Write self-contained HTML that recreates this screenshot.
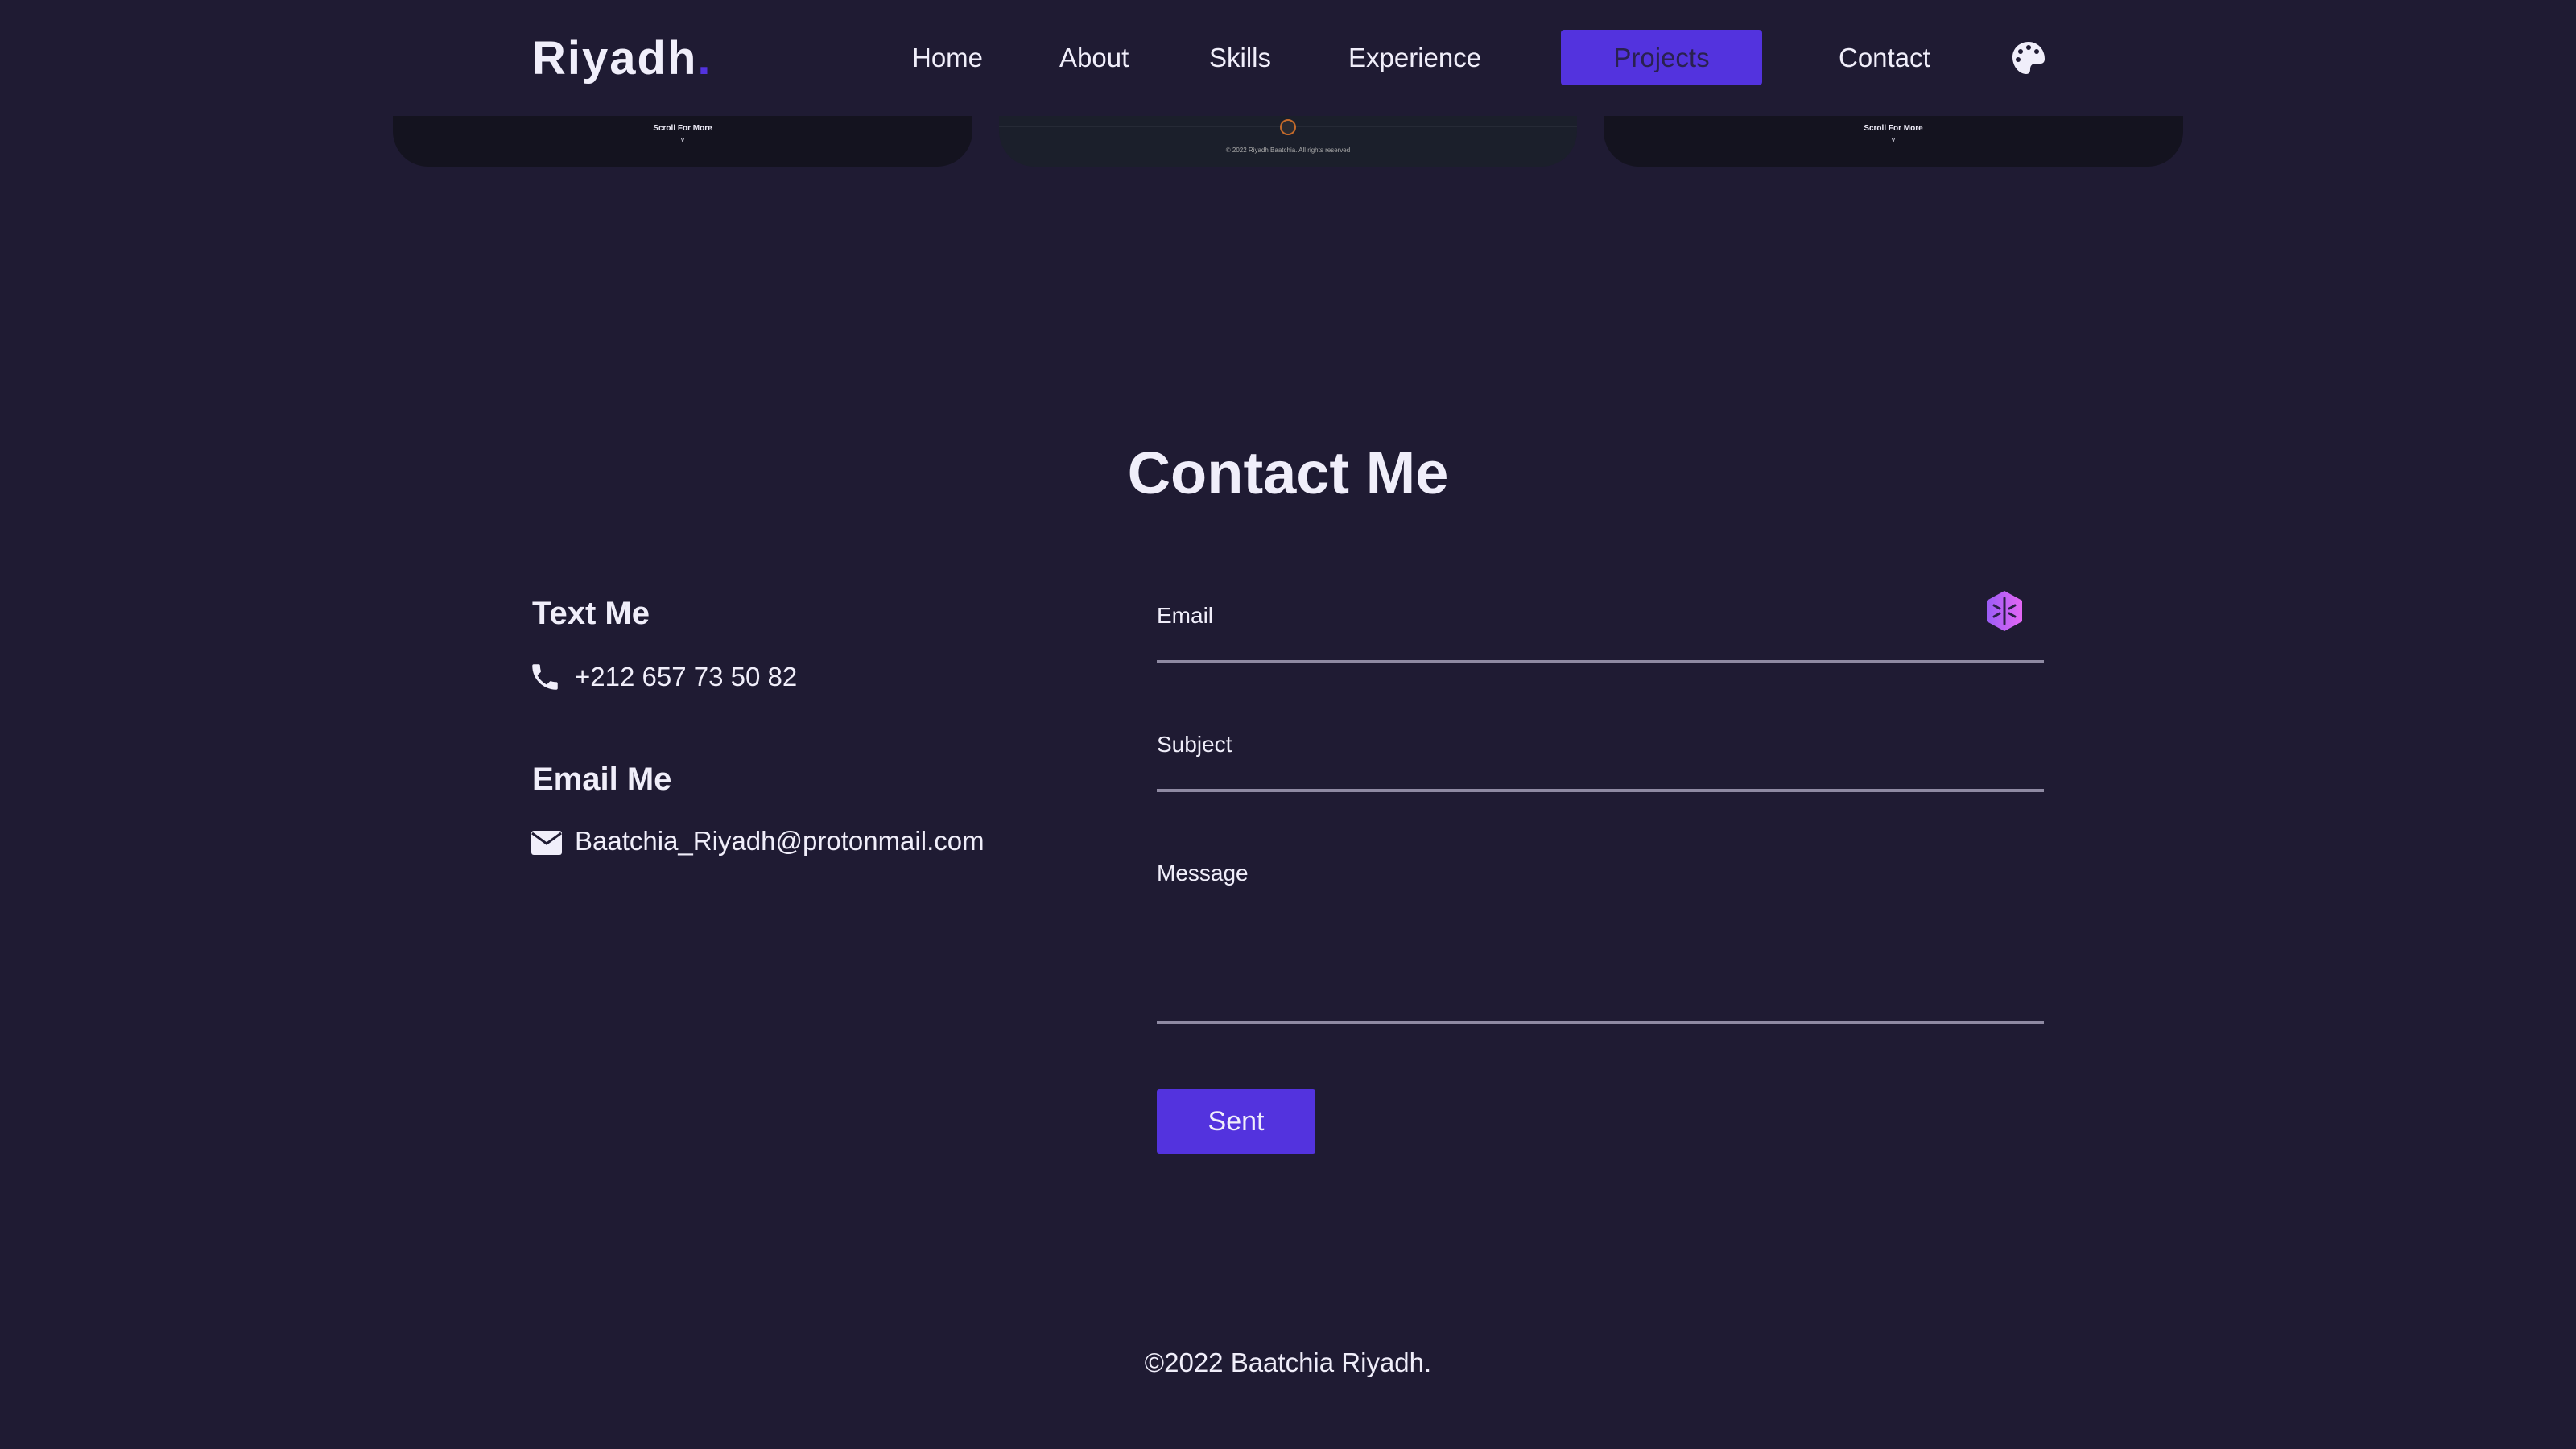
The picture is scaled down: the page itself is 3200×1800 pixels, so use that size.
<!DOCTYPE html>
<html><head><meta charset="utf-8"><style>
*{margin:0;padding:0;box-sizing:border-box}
body{width:3200px;height:1800px;background:#1f1b33;color:#f0eefa;font-family:"Liberation Sans",sans-serif;position:relative;overflow:hidden}
.a{position:absolute;white-space:nowrap}
.nav{font-size:33px;top:50px;line-height:44px}
.card{position:absolute;top:144px;height:63px;border-radius:0 0 44px 44px}
.lbl{font-size:28px}
.line{position:absolute;left:1437px;width:1102px;height:4px;background:#8f8aa3}
</style></head><body>
<div class="a" style="left:661px;top:36px;font-size:58px;font-weight:bold;letter-spacing:2px;line-height:74px">Riyadh<span style="color:#5333de">.</span></div>
<div class="a nav" style="left:1133px">Home</div>
<div class="a nav" style="left:1316px">About</div>
<div class="a nav" style="left:1502px">Skills</div>
<div class="a nav" style="left:1675px">Experience</div>
<div class="a" style="left:1939px;top:37px;width:250px;height:69px;background:#5333de;border-radius:4px;color:#2a2150;font-size:33px;line-height:69px;text-align:center">Projects</div>
<div class="a nav" style="left:2284px">Contact</div>
<svg class="a" style="left:2500px;top:52px" width="40" height="40" viewBox="0 0 40 40"><path d="M20 0C9 0 0 8 0 19c0 11 8 21 17 21 4 0 5-3 5-6 0-4 2-7 7-7h6c3 0 5-2 5-6C40 9 31 0 20 0z" fill="#f0eefa"/><circle cx="10" cy="12" r="3" fill="#1f1b33"/><circle cx="20" cy="7" r="3" fill="#1f1b33"/><circle cx="30" cy="12" r="3" fill="#1f1b33"/><circle cx="7" cy="22" r="3" fill="#1f1b33"/></svg>

<div class="card" style="left:488px;width:720px;background:#14131f"><div class="a" style="left:0;width:720px;text-align:center;top:10px;font-size:10px;font-weight:bold">Scroll For More</div><div class="a" style="left:0;width:720px;text-align:center;top:24px;font-size:9px">v</div></div>
<div class="card" style="left:1241px;width:718px;background:#1b1f2b"><div class="a" style="left:0;top:12px;width:718px;height:2px;background:#262a36"></div><div class="a" style="left:349px;top:4px;width:20px;height:20px;border-radius:50%;border:2px solid #c46a2a;background:#2a2a30"></div><div class="a" style="left:0;width:718px;text-align:center;top:38px;font-size:8px;color:#aaa">© 2022 Riyadh Baatchia. All rights reserved</div></div>
<div class="card" style="left:1992px;width:720px;background:#14131f"><div class="a" style="left:0;width:720px;text-align:center;top:10px;font-size:10px;font-weight:bold">Scroll For More</div><div class="a" style="left:0;width:720px;text-align:center;top:24px;font-size:9px">v</div></div>

<div class="a" style="left:0;width:3200px;text-align:center;top:544px;font-size:74px;font-weight:bold;line-height:88px">Contact Me</div>

<div class="a" style="left:661px;top:740px;font-size:40px;font-weight:bold">Text Me</div>
<svg class="a" style="left:656px;top:820px" width="42" height="42" viewBox="0 0 24 24"><path d="M6.6 10.8c1.4 2.8 3.8 5.1 6.6 6.6l2.2-2.2c.3-.3.7-.4 1-.2 1.1.4 2.3.6 3.6.6.6 0 1 .4 1 1V20c0 .6-.4 1-1 1C10.6 21 3 13.4 3 4c0-.6.4-1 1-1h3.5c.6 0 1 .4 1 1 0 1.3.2 2.5.6 3.6.1.3 0 .7-.2 1z" fill="#f0eefa"/></svg>
<div class="a" style="left:714px;top:822px;font-size:33px">+212 657 73 50 82</div>
<div class="a" style="left:661px;top:946px;font-size:40px;font-weight:bold">Email Me</div>
<svg class="a" style="left:660px;top:1032px" width="38" height="30" viewBox="0 0 38 30"><rect width="38" height="30" rx="3" fill="#f0eefa"/><path d="M1 3l18 13L37 3" stroke="#1f1b33" stroke-width="3" fill="none"/></svg>
<div class="a" style="left:714px;top:1026px;font-size:33px">Baatchia_Riyadh@protonmail.com</div>

<div class="a lbl" style="left:1437px;top:749px">Email</div>
<svg class="a" style="left:2466px;top:734px" width="48" height="50" viewBox="0 0 48 50"><defs><linearGradient id="g" x1="0" x2="1"><stop offset="0" stop-color="#9a5cf5"/><stop offset="1" stop-color="#e466f5"/></linearGradient></defs><path d="M24 0L46 12v26L24 50 2 38V12z" fill="url(#g)"/><path d="M24 9v32M11 18l7 4M37 18l-7 4M11 32l7-4M37 32l-7-4" stroke="#2a1f48" stroke-width="3" stroke-linecap="round"/></svg>
<div class="line" style="top:820px"></div>
<div class="a lbl" style="left:1437px;top:909px">Subject</div>
<div class="line" style="top:980px"></div>
<div class="a lbl" style="left:1437px;top:1069px">Message</div>
<div class="line" style="top:1268px"></div>
<div class="a" style="left:1437px;top:1353px;width:197px;height:80px;background:#5333de;border-radius:3px;font-size:34px;line-height:80px;text-align:center">Sent</div>

<div class="a" style="left:0;width:3200px;text-align:center;top:1674px;font-size:33px">©2022 Baatchia Riyadh.</div>
</body></html>
